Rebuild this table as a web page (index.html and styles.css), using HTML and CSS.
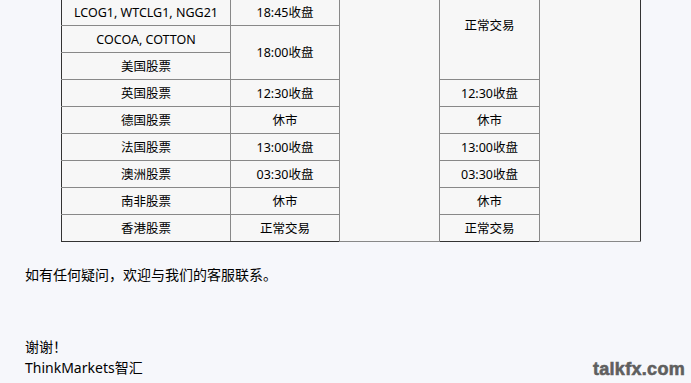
FILE: index.html
```html
<!DOCTYPE html>
<html lang="zh-CN">
<head>
<meta charset="utf-8">
<title>交易时间通知</title>
<link rel="stylesheet" href="styles.css">
</head>
<body>
<div class="page">
  <table class="hours">
    <colgroup>
      <col class="c1"><col class="c2"><col class="c3"><col class="c4"><col class="c5">
    </colgroup>
    <tbody>
      <tr>
        <td></td>
        <td></td>
        <td rowspan="10"></td>
        <td rowspan="4">正常交易</td>
        <td rowspan="10"></td>
      </tr>
      <tr>
        <td>LCOG1, WTCLG1, NGG21</td>
        <td>18:45收盘</td>
      </tr>
      <tr>
        <td>COCOA, COTTON</td>
        <td rowspan="2">18:00收盘</td>
      </tr>
      <tr>
        <td>美国股票</td>
      </tr>
      <tr>
        <td>英国股票</td>
        <td>12:30收盘</td>
        <td>12:30收盘</td>
      </tr>
      <tr>
        <td>德国股票</td>
        <td>休市</td>
        <td>休市</td>
      </tr>
      <tr>
        <td>法国股票</td>
        <td>13:00收盘</td>
        <td>13:00收盘</td>
      </tr>
      <tr>
        <td>澳洲股票</td>
        <td>03:30收盘</td>
        <td>03:30收盘</td>
      </tr>
      <tr>
        <td>南非股票</td>
        <td>休市</td>
        <td>休市</td>
      </tr>
      <tr>
        <td>香港股票</td>
        <td>正常交易</td>
        <td>正常交易</td>
      </tr>
    </tbody>
  </table>

  <p class="note">如有任何疑问，欢迎与我们的客服联系。</p>
  <p class="thanks">谢谢！</p>
  <p class="sign">ThinkMarkets智汇</p>
</div>
<div class="watermark">talkfx.com</div>
</body>
</html>
```
FILE: styles.css
```css
html, body {
  margin: 0;
  padding: 0;
}
body {
  background: #f6f7fb;
  color: #000;
  font-family: "Noto Sans", "Noto Sans CJK SC", sans-serif;
  overflow: hidden;
  height: 383px;
}
.page {
  padding-left: 61px;
  margin-top: -29px;
}
.hours {
  border-collapse: collapse;
  background: #f7f7f7;
  border: 1px solid #333;
  table-layout: fixed;
  width: 580px;
  font-size: 12.5px;
}
.hours .c1 { width: 169px; }
.hours .c2 { width: 109px; }
.hours .c3 { width: 100px; }
.hours .c4 { width: 100px; }
.hours .c5 { width: 101px; }
.hours td {
  border: 1px solid #888;
  height: 27px;
  padding: 1px 0 0;
  text-align: center;
  vertical-align: middle;
  line-height: 16px;
  box-sizing: border-box;
}
.hours tr:last-child td { border-bottom-color: #333; }
.hours td:last-child { border-right-color: #333; }
.hours tr td:first-child { border-left-color: #333; }

.note, .thanks, .sign {
  margin: 0;
  margin-left: -36px;
  font-size: 14px;
  line-height: 21px;
}
.note { margin-top: 22px; }
.thanks { margin-top: 51px; }

.watermark {
  position: absolute;
  right: 6px;
  bottom: 3px;
  font-family: "Liberation Sans", Arial, sans-serif;
  font-weight: 700;
  font-size: 18px;
  color: #5f5f5f;
  letter-spacing: 0.3px;
  -webkit-text-stroke: 0.6px #5f5f5f;
}
```
